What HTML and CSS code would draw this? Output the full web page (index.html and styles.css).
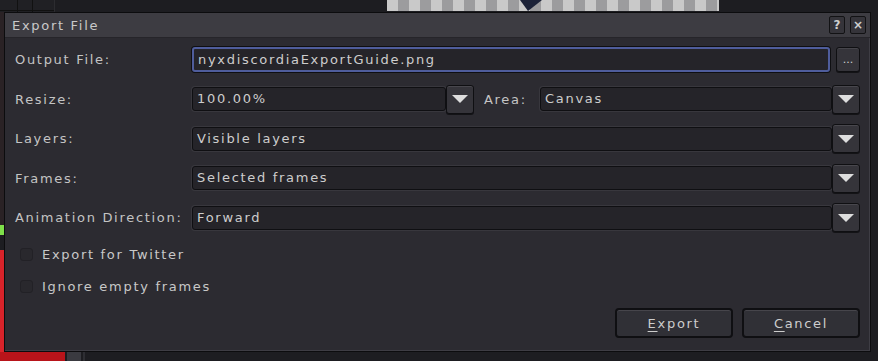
FILE: index.html
```html
<!DOCTYPE html>
<html lang="en">
<head>
    <meta charset="UTF-8">
    <title>Export File</title>
    <link rel="stylesheet" href="styles.css">
</head>
<body>
    <div class="top-strip">
        <div class="tiles"></div>
        <div class="checker"><span class="mark"></span></div>
    </div>
    <div class="middle">
        <div class="side">
            <div class="side-dark"></div>
            <div class="side-green"></div>
            <div class="side-gap"></div>
            <div class="side-red"></div>
        </div>
        <div class="dialog">
            <div class="titlebar">
                <span class="title">Export File</span>
                <div class="tb-buttons">
                    <span class="tb-btn">?</span>
                    <span class="tb-btn">&#215;</span>
                </div>
            </div>
            <div class="dialog-body">
                <div class="form-grid">
                    <label>Output File:</label>
                    <div class="row">
                        <div class="field focused">nyxdiscordiaExportGuide.png</div>
                        <span class="small-btn">...</span>
                    </div>

                    <label>Resize:</label>
                    <div class="row">
                        <div class="field resize">100.00%</div>
                        <span class="drop-btn"><span class="arrow"></span></span>
                        <label class="inline-label">Area:</label>
                        <div class="field">Canvas</div>
                        <span class="drop-btn"><span class="arrow"></span></span>
                    </div>

                    <label>Layers:</label>
                    <div class="row">
                        <div class="field">Visible layers</div>
                        <span class="drop-btn"><span class="arrow"></span></span>
                    </div>

                    <label>Frames:</label>
                    <div class="row">
                        <div class="field">Selected frames</div>
                        <span class="drop-btn"><span class="arrow"></span></span>
                    </div>

                    <label>Animation Direction:</label>
                    <div class="row">
                        <div class="field">Forward</div>
                        <span class="drop-btn"><span class="arrow"></span></span>
                    </div>
                </div>

                <div class="checks">
                    <div class="check"><span class="box"></span>Export for Twitter</div>
                    <div class="check"><span class="box"></span>Ignore empty frames</div>
                </div>

                <div class="actions">
                    <span class="btn"><u>E</u>xport</span>
                    <span class="btn"><u>C</u>ancel</span>
                </div>
            </div>
        </div>
    </div>
    <div class="bottom-strip">
        <div class="bottom-red"></div>
        <div class="bottom-grey"></div>
        <div class="bottom-line"></div>
    </div>
</body>
</html>
```

FILE: styles.css
```css
* {
    box-sizing: border-box;
}
body {
    margin: 0;
    width: 878px;
    height: 361px;
    overflow: hidden;
    background: #1d1d21;
    font-family: 'DejaVu Sans', 'Liberation Sans', sans-serif;
    font-size: 13px;
    letter-spacing: 1.7px;
    color: #c8c8c8;
}
.top-strip {
    height: 12px;
    display: flex;
}
.tiles {
    width: 55px;
    border-right: 1px solid #2c2c30;
    background:
        linear-gradient(#111 0 0) 0 10px / 100% 1px no-repeat,
        linear-gradient(#111 0 0) 17px 0 / 1px 100% no-repeat,
        linear-gradient(#111 0 0) 32px 0 / 1px 100% no-repeat,
        #202024;
}
.checker {
    position: relative;
    margin-left: 332px;
    width: 332px;
    height: 11px;
    background: repeating-linear-gradient(90deg, #c9c9c9 0 11px, #9c9c9e 11px 22px);
}
.mark {
    position: absolute;
    left: 133px;
    top: 0;
    width: 0;
    height: 0;
    border-left: 8px solid transparent;
    border-right: 14px solid transparent;
    border-top: 11px solid #1c2238;
}
.middle {
    display: flex;
    height: 340px;
}
.side {
    width: 4px;
    display: flex;
    flex-direction: column;
}
.side-dark { height: 213px; background: #2a2225; }
.side-green { height: 10px; background: #7ee04a; }
.side-gap { height: 15px; background: #1d1d21; }
.side-red { flex: 1; background: #d8232a; }

.dialog {
    width: 867px;
    border: 1px solid #0c0c0e;
    background: #2c2b31;
    display: flex;
    flex-direction: column;
    box-shadow: inset -1px -1px 0 #3e3d44;
}
.titlebar {
    height: 25px;
    background: #3d3c42;
    border-bottom: 1px solid #26252a;
    display: flex;
    align-items: center;
    justify-content: space-between;
    padding: 0 4px 0 7px;
}
.title {
    color: #c9c9c9;
}
.tb-buttons {
    display: flex;
    gap: 5px;
}
.tb-btn {
    width: 16px;
    height: 18px;
    border: 1px solid #121214;
    border-radius: 2px;
    background: #35343a;
    color: #cfcfcf;
    font-size: 12px;
    font-weight: bold;
    letter-spacing: 0;
    display: flex;
    align-items: center;
    justify-content: center;
}
.dialog-body {
    flex: 1;
    padding: 7px 10px 13px 10px;
    display: flex;
    flex-direction: column;
}
.form-grid {
    display: grid;
    grid-template-columns: 177px 1fr;
    grid-auto-rows: 29px;
    row-gap: 10.6px;
    align-items: center;
}
label {
    color: #c4c4c4;
}
.row {
    display: flex;
    align-items: center;
}
.field {
    flex: 1;
    min-width: 0;
    height: 24px;
    line-height: 22px;
    padding: 0 4px;
    background: #252429;
    border: 1px solid #0f0f12;
    border-radius: 3px;
    box-shadow: 0 0 0 1px #38373d;
    color: #cdcdcd;
    white-space: nowrap;
}
.field.focused {
    height: 25px;
    border: 2px solid #4f5d9c;
    line-height: 21px;
    box-shadow: 0 0 0 1px #0f0f12;
    margin-right: 6px;
}
.field.resize {
    flex: 0 0 254px;
}
.inline-label {
    flex: 0 0 66px;
    padding-left: 10px;
}
.small-btn {
    width: 24px;
    height: 25px;
    border: 1px solid #0f0f12;
    border-radius: 3px;
    background: #35343a;
    box-shadow: inset 0 1px 0 #46454b, 0 1px 0 #131316;
    color: #d0d0d0;
    font-size: 11px;
    display: flex;
    align-items: center;
    justify-content: center;
    letter-spacing: 0;
}
.drop-btn {
    width: 28px;
    height: 29px;
    border: 1px solid #0f0f12;
    border-radius: 3px;
    background: #35343a;
    box-shadow: inset 0 1px 0 #48474d, 0 1px 0 #131316;
    display: flex;
    align-items: center;
    justify-content: center;
    flex-shrink: 0;
}
.arrow {
    width: 0;
    height: 0;
    border-left: 8px solid transparent;
    border-right: 8px solid transparent;
    border-top: 8px solid #dedede;
}
.checks {
    margin-top: 13px;
    display: flex;
    flex-direction: column;
    gap: 13px;
    padding-left: 5px;
}
.check {
    display: flex;
    align-items: center;
    height: 19px;
}
.box {
    width: 13px;
    height: 13px;
    border: 1px solid #222126;
    border-radius: 3px;
    background: #29282d;
    margin-right: 9px;
}
.actions {
    margin-top: auto;
    display: flex;
    justify-content: flex-end;
    gap: 9px;
}
.btn {
    width: 118px;
    height: 30px;
    border: 2px solid #0f0f12;
    border-radius: 4px;
    background: #303036;
    box-shadow: inset 0 1px 0 #46454b;
    display: flex;
    align-items: center;
    justify-content: center;
    color: #cdcdcd;
}
.btn u {
    text-underline-offset: 3px;
}
.bottom-strip {
    height: 9px;
    display: flex;
}
.bottom-red {
    width: 65px;
    background: #b8141a;
}
.bottom-grey {
    width: 14px;
    margin-left: 2px;
    background: #3a3a40;
}
.bottom-line {
    width: 2px;
    margin-left: 2px;
    background: #2e2e33;
}
```
